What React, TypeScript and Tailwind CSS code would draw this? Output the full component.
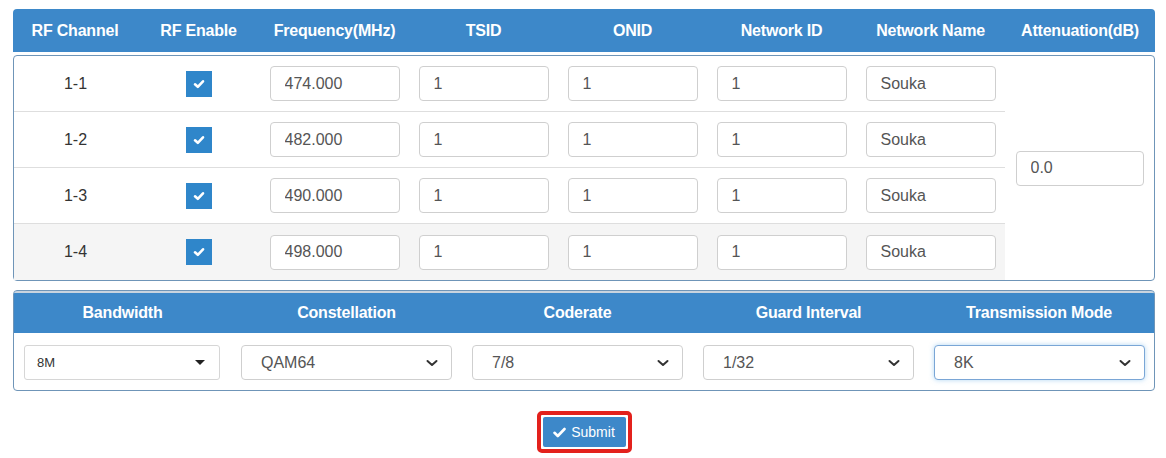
import { useState } from "react";

type Row = {
  channel: string;
  freq: string;
  tsid: string;
  onid: string;
  netId: string;
  netName: string;
};

const rows: Row[] = [
  { channel: "1-1", freq: "474.000", tsid: "1", onid: "1", netId: "1", netName: "Souka" },
  { channel: "1-2", freq: "482.000", tsid: "1", onid: "1", netId: "1", netName: "Souka" },
  { channel: "1-3", freq: "490.000", tsid: "1", onid: "1", netId: "1", netName: "Souka" },
  { channel: "1-4", freq: "498.000", tsid: "1", onid: "1", netId: "1", netName: "Souka" },
];

const headers = [
  "RF Channel",
  "RF Enable",
  "Frequency(MHz)",
  "TSID",
  "ONID",
  "Network ID",
  "Network Name",
  "Attenuation(dB)",
];

const Check = () => (
  <div className="w-[26px] h-[26px] bg-[#2f86ca] flex items-center justify-center">
    <svg width="14" height="14" viewBox="0 0 14 14">
      <path d="M3 7.3 L5.8 9.8 L11 4.3" fill="none" stroke="#fff" strokeWidth="2.6" strokeLinecap="round" strokeLinejoin="round" />
    </svg>
  </div>
);

const Field = ({ value }: { value: string }) => (
  <input
    defaultValue={value}
    className="w-[130px] h-[35px] border border-[#cfcfcf] rounded-[4px] px-[14px] text-[16px] text-[#555] bg-white outline-none"
  />
);

const Chevron = () => (
  <svg width="14" height="10" viewBox="0 0 14 10">
    <path d="M2.5 3 L7 7 L11.5 3" fill="none" stroke="#333" strokeWidth="2" strokeLinecap="round" strokeLinejoin="round" />
  </svg>
);

const SelectBox = ({ value, focused }: { value: string; focused?: boolean }) => (
  <div
    className={
      focused
        ? "w-[211px] h-[35px] border border-[#7aa6d6] rounded-[4px] flex items-center justify-between pl-[19px] pr-[12px] shadow-[0_0_5px_rgba(102,175,233,0.5)] bg-white"
        : "w-[211px] h-[35px] border border-[#cfcfcf] rounded-[4px] flex items-center justify-between pl-[19px] pr-[12px] bg-white"
    }
  >
    <span className="text-[16px] text-[#555]">{value}</span>
    <Chevron />
  </div>
);

export default function App() {
  const [att] = useState("0.0");

  return (
    <div className="w-[1166px] h-[458px] bg-white pt-[9px] pl-[13px]" style={{ fontFamily: "'Liberation Sans', Arial, sans-serif" }}>
      <div className="w-[1142px]">
        {/* channel table */}
        <div className="grid grid-cols-[124px_123px_149px_149px_149px_149px_149px_150px] h-[43px] bg-[#3d88c9] rounded-t-[4px] text-white font-bold text-[16px] tracking-[-0.2px]">
          {headers.map((h) => (
            <div key={h} className="flex items-center justify-center">
              {h}
            </div>
          ))}
        </div>
        <div className="mt-[3px] border border-[#6f95b8] rounded-[4px] flex">
          <div className="w-[991px]">
            {rows.map((r, i) => (
              <div
                key={r.channel}
                className={
                  i === 3
                    ? "grid grid-cols-[123px_123px_149px_149px_149px_149px_149px] h-[56px] bg-[#f5f5f5]"
                    : "grid grid-cols-[123px_123px_149px_149px_149px_149px_149px] h-[56px] border-b border-[#dedede]"
                }
              >
                <div className="flex items-center justify-center text-[16px] text-[#333]">{r.channel}</div>
                <div className="flex items-center justify-center">
                  <Check />
                </div>
                <div className="flex items-center justify-center">
                  <Field value={r.freq} />
                </div>
                <div className="flex items-center justify-center">
                  <Field value={r.tsid} />
                </div>
                <div className="flex items-center justify-center">
                  <Field value={r.onid} />
                </div>
                <div className="flex items-center justify-center">
                  <Field value={r.netId} />
                </div>
                <div className="flex items-center justify-center">
                  <Field value={r.netName} />
                </div>
              </div>
            ))}
          </div>
          <div className="flex-1 flex items-center justify-center">
            <input
              defaultValue={att}
              className="w-[128px] h-[35px] border border-[#cfcfcf] rounded-[4px] px-[14px] text-[16px] text-[#555] bg-white outline-none"
            />
          </div>
        </div>

        {/* modulation table */}
        <div className="mt-[9px] border border-[#6f95b8] rounded-[4px] overflow-hidden">
          <div className="grid grid-cols-[217px_231px_231px_231px_1fr] h-[42px] bg-[#3d88c9] text-white font-bold text-[16px] tracking-[-0.2px] border-t-[2px] border-[#c9d4df]">
            {["Bandwidth", "Constellation", "Coderate", "Guard Interval", "Transmission Mode"].map((h) => (
              <div key={h} className="flex items-center justify-center">
                {h}
              </div>
            ))}
          </div>
          <div className="grid grid-cols-[217px_231px_231px_231px_1fr] h-[57px] items-start pt-[12px]">
            <div className="pl-[10px]">
              <div className="w-[196px] h-[35px] border border-[#d6d6d6] rounded-[3px] flex items-center justify-between pl-[12px] pr-[14px] bg-white">
                <span className="text-[13px] text-[#333]">8M</span>
                <svg width="10" height="6" viewBox="0 0 10 6">
                  <path d="M0 0 L10 0 L5 5 Z" fill="#222" />
                </svg>
              </div>
            </div>
            <div className="pl-[10px]">
              <SelectBox value="QAM64" />
            </div>
            <div className="pl-[10px]">
              <SelectBox value="7/8" />
            </div>
            <div className="pl-[10px]">
              <SelectBox value="1/32" />
            </div>
            <div className="pl-[10px]">
              <SelectBox value="8K" focused />
            </div>
          </div>
        </div>
      </div>

      {/* submit */}
      <div className="w-[1142px] flex justify-center mt-[20px]">
        <div className="border-[4px] border-[#e3211c] rounded-[5px] p-[2px]">
          <button className="w-[83px] h-[30px] bg-[#3d88c9] text-white text-[14px] flex items-center justify-center gap-[5px] rounded-[2px]">
            <svg width="13" height="11" viewBox="0 0 13 11">
              <path d="M1.5 5.8 L4.8 9 L11.5 2" fill="none" stroke="#fff" strokeWidth="2.6" strokeLinecap="round" strokeLinejoin="round" />
            </svg>
            Submit
          </button>
        </div>
      </div>
    </div>
  );
}
